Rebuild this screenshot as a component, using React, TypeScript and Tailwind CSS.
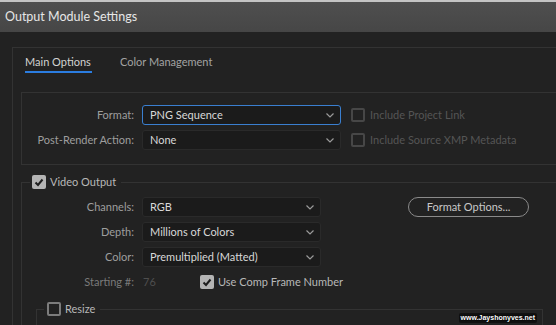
import clsx from 'clsx';

const cn = clsx;

type SelectProps = { value: string; width: string; focused?: boolean };

function Chevron() {
  return (
    <svg width="8" height="5" viewBox="0 0 8 5" className="shrink-0">
      <polyline points="0.5,0.5 4,4 7.5,0.5" fill="none" stroke="#9a9a9a" strokeWidth="1.2" />
    </svg>
  );
}

function Select({ value, width, focused }: SelectProps) {
  return (
    <div
      className={cn(
        'flex h-[20px] shrink-0 items-center justify-between rounded-[3px] border bg-[#1b1b1b] pl-[7px] pr-[6px] text-[#d8d8d8]',
        focused ? 'border-[#3a7fd0]' : 'border-[#2a2a2a]',
        width
      )}
    >
      <span>{value}</span>
      <Chevron />
    </div>
  );
}

function Check({ checked, dim }: { checked?: boolean; dim?: boolean }) {
  if (checked) {
    return (
      <div className="flex h-[14px] w-[14px] shrink-0 items-center justify-center rounded-[2px] bg-[#b4b4b4]">
        <svg width="10" height="9" viewBox="0 0 10 9">
          <polyline points="1.5,4.5 4,7 8.5,1.5" fill="none" stroke="#1e1e1e" strokeWidth="2" />
        </svg>
      </div>
    );
  }
  return (
    <div
      className={cn(
        'h-[14px] w-[14px] shrink-0 rounded-[2px] border-2',
        dim ? 'border-[#474747]' : 'border-[#7c7c7c]'
      )}
    />
  );
}

function Label({ children, dim }: { children: string; dim?: boolean }) {
  return (
    <div className={cn('w-[112px] shrink-0 text-right', dim ? 'text-[#7a7a7a]' : 'text-[#9e9e9e]')}>
      {children}
    </div>
  );
}

export default function App() {
  return (
    <div className="relative h-[325px] w-[556px] overflow-hidden bg-[#222222] font-['Lato',sans-serif] text-[11px] leading-[16px]">
      {/* title bar */}
      <div className="flex h-[32px] items-center border-t-2 border-[#c4c4c4] bg-gradient-to-b from-[#4f4f4f] to-[#464646] pl-[5px] text-[12.5px] text-[#e6e6e6]">
        Output Module Settings
      </div>

      <div className="ml-[12px] mt-[15px] w-[600px] border-l border-t border-[#333333]">
        {/* tabs */}
        <div className="flex gap-[28px] pl-[12px] pt-[6px]">
          <div className="flex w-[67px] flex-col">
            <span className="text-[#d2d2d2]">Main Options</span>
            <div className="mt-[1px] h-[2px] bg-[#2b7de0]" />
          </div>
          <span className="text-[#a3a3a3]">Color Management</span>
        </div>

        {/* format box */}
        <div className="ml-[8px] mt-[19px] flex flex-col gap-[5px] border-b border-l border-t border-[#333333] pb-[14px] pt-[12px]">
          <div className="flex items-center gap-[8px]">
            <Label>Format:</Label>
            <Select value="PNG Sequence" width="w-[199px]" focused />
            <div className="ml-[2px] flex items-center gap-[5px] text-[#555555]">
              <Check dim />
              <span>Include Project Link</span>
            </div>
          </div>
          <div className="flex items-center gap-[8px]">
            <Label>Post-Render Action:</Label>
            <Select value="None" width="w-[199px]" />
            <div className="ml-[2px] flex items-center gap-[5px] text-[#555555]">
              <Check dim />
              <span>Include Source XMP Metadata</span>
            </div>
          </div>
        </div>

        {/* video output */}
        <fieldset className="ml-[8px] mt-[10px] border-l border-t border-[#333333] pt-[8px]">
          <legend className="ml-[8px] flex h-[14px] items-center gap-[4px] pl-[2px] pr-[5px] text-[#b8b8b8]">
            <Check checked />
            <span>Video Output</span>
          </legend>
          <div className="flex flex-col gap-[5px]">
            <div className="flex items-center gap-[8px]">
              <Label>Channels:</Label>
              <Select value="RGB" width="w-[179px]" />
              <div className="ml-[79px] flex h-[20px] w-[121px] items-center justify-center rounded-full border border-[#8a8a8a] text-[#c8c8c8]">
                Format Options...
              </div>
            </div>
            <div className="flex items-center gap-[8px]">
              <Label>Depth:</Label>
              <Select value="Millions of Colors" width="w-[179px]" />
            </div>
            <div className="flex items-center gap-[8px]">
              <Label>Color:</Label>
              <Select value="Premultiplied (Matted)" width="w-[179px]" />
            </div>
            <div className="flex h-[20px] items-center gap-[8px]">
              <Label dim>Starting #:</Label>
              <span className="w-[50px] pl-[1px] text-[#4e4e4e]">76</span>
              <div className="flex items-center gap-[4px] text-[#b8b8b8]">
                <Check checked />
                <span>Use Comp Frame Number</span>
              </div>
            </div>
          </div>

          {/* resize */}
          <fieldset className="ml-[14px] mt-[10px] h-[40px] w-[507px] border-l border-r border-t border-[#333333]">
            <legend className="ml-[7px] flex h-[14px] items-center gap-[4px] pl-[3px] pr-[5px] text-[#b8b8b8]">
              <Check />
              <span>Resize</span>
            </legend>
          </fieldset>
        </fieldset>
      </div>

      <div className="absolute bottom-[2px] right-[19px] rounded-[2px] bg-[#111111] px-[2px] font-['Liberation_Sans',sans-serif] text-[7px] font-bold leading-[10px] text-white [text-shadow:0_0_2px_#000,0_0_1px_#000]">
        www.Jayshonyves.net
      </div>
    </div>
  );
}
